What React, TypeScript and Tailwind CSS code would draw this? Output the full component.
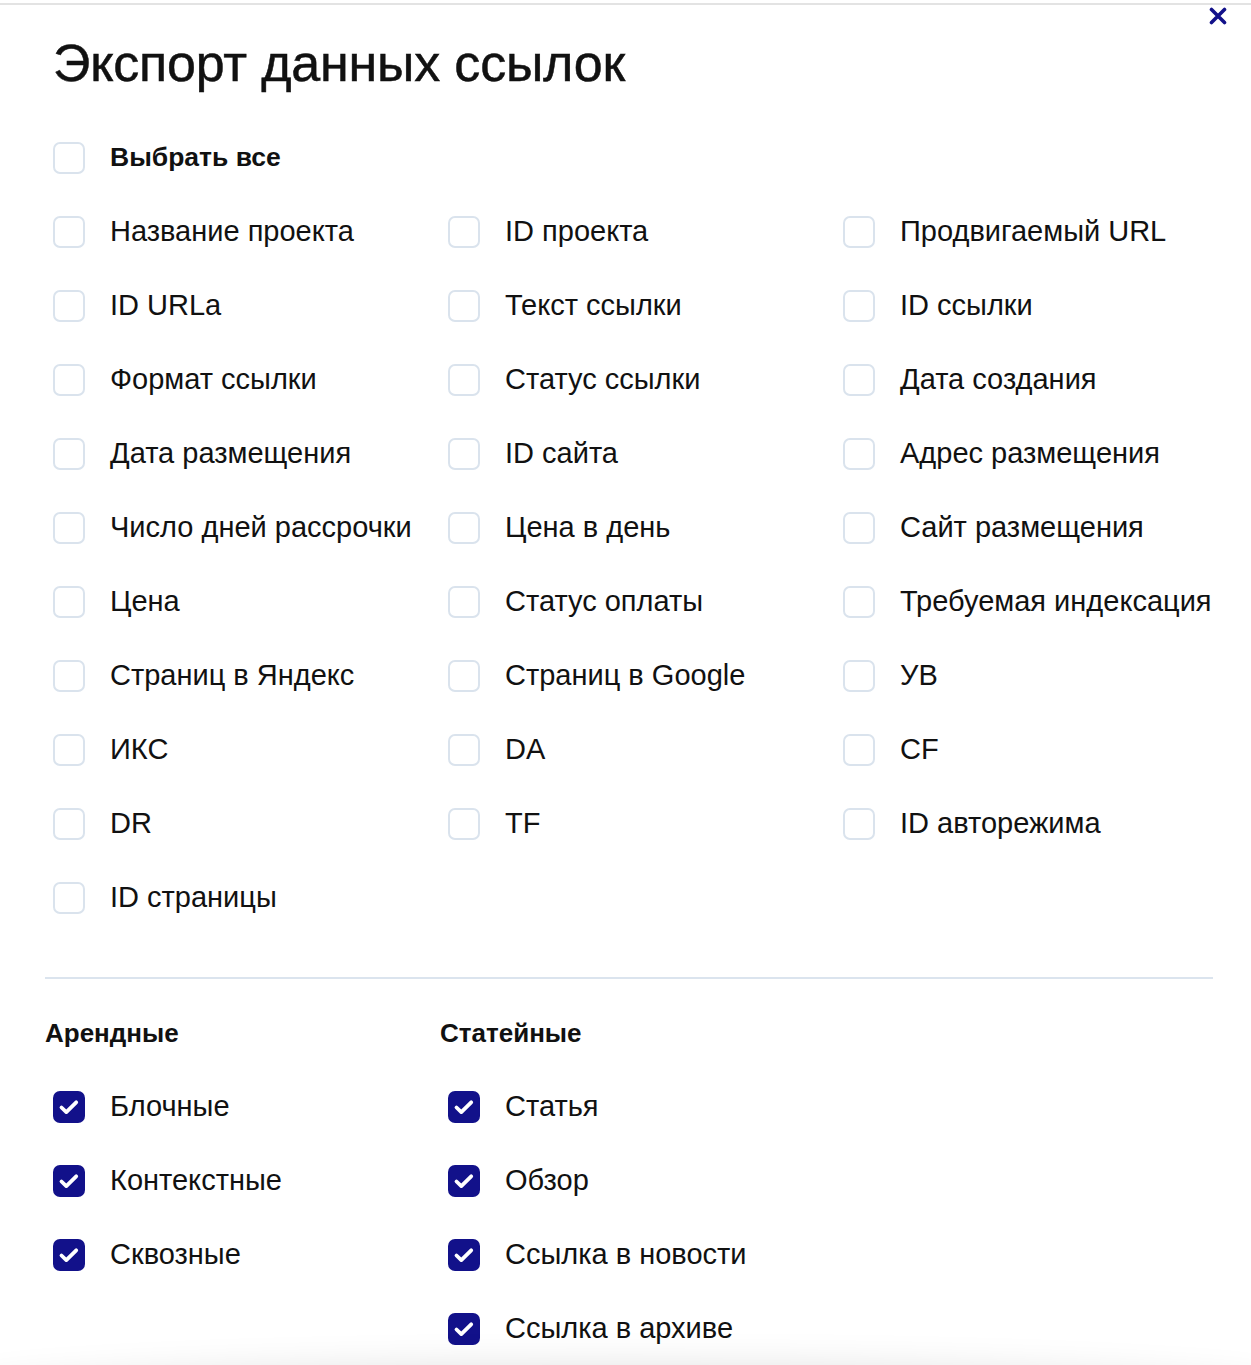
import React, { useState } from "react";

const FONT = { fontFamily: '"Liberation Sans", Arial, sans-serif' };

const fields: string[][] = [
  ["Название проекта", "ID проекта", "Продвигаемый URL"],
  ["ID URLa", "Текст ссылки", "ID ссылки"],
  ["Формат ссылки", "Статус ссылки", "Дата создания"],
  ["Дата размещения", "ID сайта", "Адрес размещения"],
  ["Число дней рассрочки", "Цена в день", "Сайт размещения"],
  ["Цена", "Статус оплаты", "Требуемая индексация"],
  ["Страниц в Яндекс", "Страниц в Google", "УВ"],
  ["ИКС", "DA", "CF"],
  ["DR", "TF", "ID авторежима"],
  ["ID страницы"],
];

const rent = ["Блочные", "Контекстные", "Сквозные"];
const article = ["Статья", "Обзор", "Ссылка в новости", "Ссылка в архиве"];

function Box({ checked }: { checked: boolean }) {
  return checked ? (
    <span className="w-[32px] h-[32px] rounded-[7px] bg-[#12118a] flex items-center justify-center shrink-0">
      <svg width="32" height="32" viewBox="0 0 32 32" fill="none">
        <path
          d="M8.5 16.5l4.8 4.6L23.2 11.3"
          stroke="white"
          strokeWidth="3.8"
          strokeLinecap="round"
          strokeLinejoin="round"
        />
      </svg>
    </span>
  ) : (
    <span className="w-[32px] h-[32px] rounded-[7px] border-2 border-[#dae3ed] bg-white shrink-0" />
  );
}

function Row({
  label,
  checked,
  bold,
  onToggle,
}: {
  label: string;
  checked: boolean;
  bold?: boolean;
  onToggle: () => void;
}) {
  return (
    <label
      onClick={onToggle}
      className="flex items-center gap-[25px] h-[74px] pl-[8px] cursor-pointer select-none"
    >
      <Box checked={checked} />
      <span
        className={`text-[#111] whitespace-nowrap ${bold ? "font-bold text-[26.5px]" : "text-[29px]"}`}
      >
        {label}
      </span>
    </label>
  );
}

export default function App() {
  const [sel, setSel] = useState<Record<string, boolean>>(() => {
    const s: Record<string, boolean> = {};
    [...rent, ...article].forEach((k) => (s[k] = true));
    return s;
  });
  const toggle = (k: string) => setSel((p) => ({ ...p, [k]: !p[k] }));

  return (
    <div className="relative w-[1251px] h-[1365px] overflow-hidden bg-white" style={FONT}>
      <div className="h-[5px] border-b-[2px] border-[#e3e3e3]" />
      <button className="absolute right-[24px] top-[7px] text-[#12118a]">
        <svg width="18" height="18" viewBox="0 0 18 18">
          <path
            d="M2.5 2.5l13 13M15.5 2.5l-13 13"
            stroke="currentColor"
            strokeWidth="3.6"
            strokeLinecap="round"
          />
        </svg>
      </button>

      <div className="pl-[45px] pr-[38px]">
        <h1 className="text-[52px] text-[#111] pl-[8px] pt-[27px] pb-[27px] leading-[62px] tracking-[-0.2px] [-webkit-text-stroke:0.5px_#111]">
          Экспорт данных ссылок
        </h1>

        <Row label="Выбрать все" bold checked={!!sel["all"]} onToggle={() => toggle("all")} />

        <div className="grid grid-cols-[395px_395px_1fr]">
          {fields.flat().map((f) => (
            <Row key={f} label={f} checked={!!sel[f]} onToggle={() => toggle(f)} />
          ))}
        </div>

        <div className="mt-[42px] border-t-[2px] border-[#dbe4ee]" />

        <div className="grid grid-cols-[395px_1fr] pt-[17px]">
          <div>
            <h2 className="text-[26px] font-bold text-[#111] h-[74px] leading-[74px]">Арендные</h2>
            {rent.map((f) => (
              <Row key={f} label={f} checked={!!sel[f]} onToggle={() => toggle(f)} />
            ))}
          </div>
          <div>
            <h2 className="text-[26px] font-bold text-[#111] h-[74px] leading-[74px]">Статейные</h2>
            {article.map((f) => (
              <Row key={f} label={f} checked={!!sel[f]} onToggle={() => toggle(f)} />
            ))}
          </div>
        </div>
      </div>

      <div className="absolute left-[-40px] right-[-40px] top-[1378px] h-[60px] rounded-[50%] shadow-[0_-8px_40px_rgba(0,0,0,0.14)]" />
    </div>
  );
}
